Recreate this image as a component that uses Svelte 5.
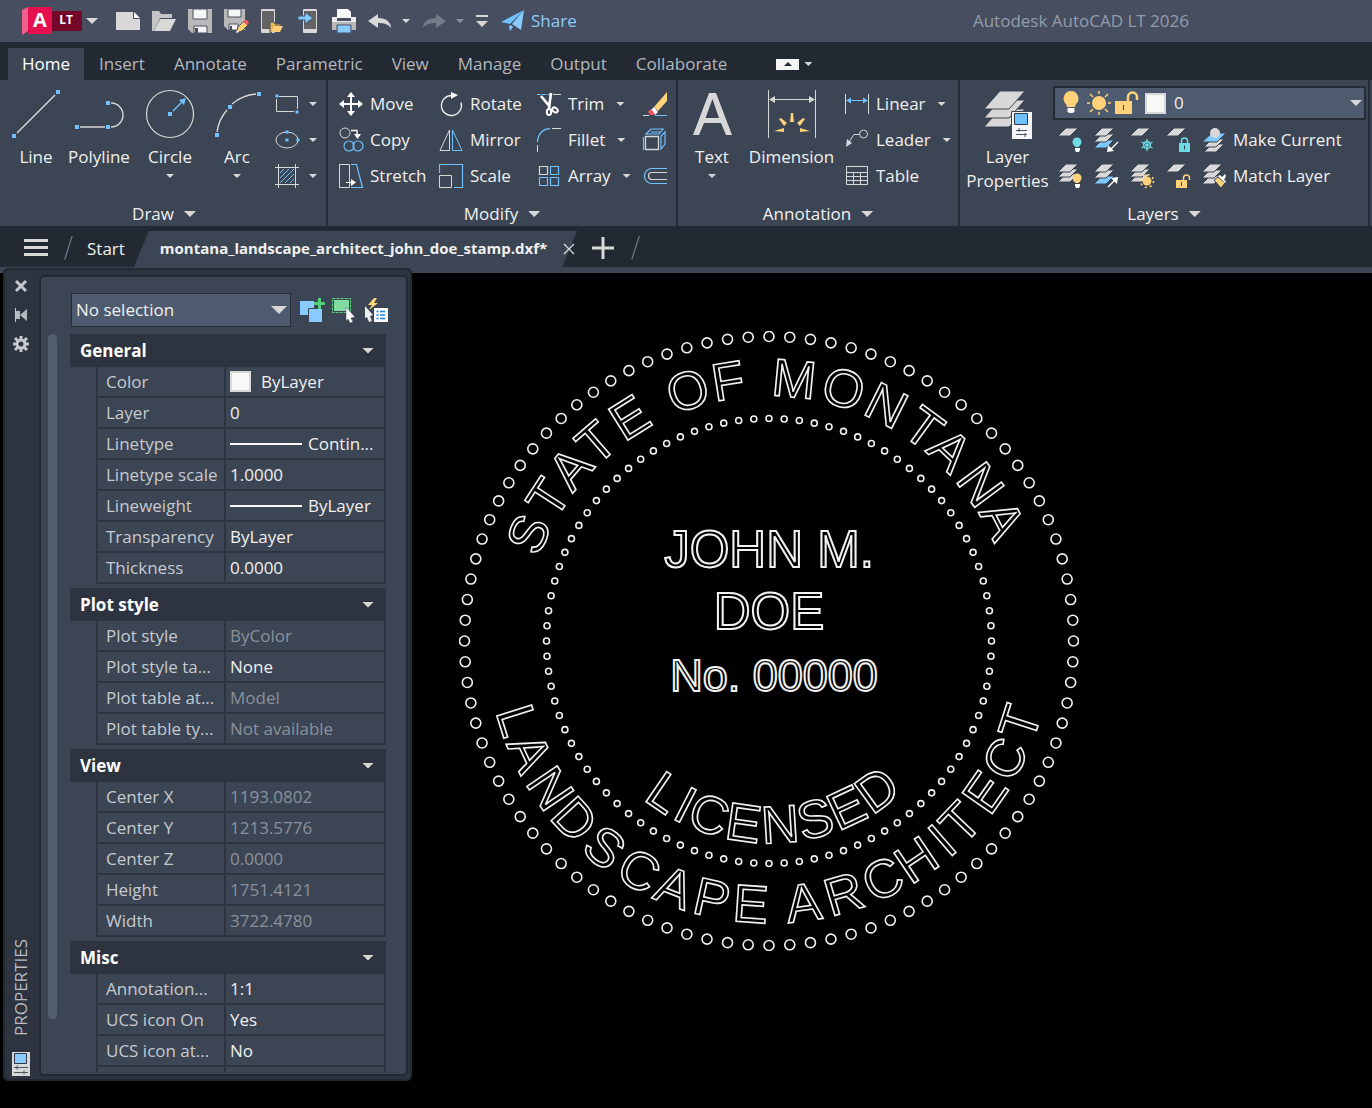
<script lang="ts">
    type Row = { label: string; value: string; kind?: "swatch" | "line"; dim?: boolean };
    type Glyph = [char: string, angle: number];

    const W = "#d8d8d8";
    const B = "#6fc1ff";
    const Y = "#ffd27a";
    const C = "#70dbe6";

    const sq = (x: number, y: number, s = 4) =>
        `<rect x="${x - s / 2}" y="${y - s / 2}" width="${s}" height="${s}" fill="${B}"/>`;
    const sheet = (y: number, fill = W, x = 0) =>
        `<path d="M${x} ${y + 8}L${x + 8} ${y}H${x + 20}L${x + 12} ${y + 8}z" fill="${fill}" stroke="#3c4553"/>`;
    const bulb = (fill: string) =>
        `<circle cx="19" cy="14" r="4.5" fill="${fill}"/><path d="M17 18h4v1h-4z" fill="${fill}"/><path d="M17 20h5v2l-1 2h-3l-1-2z" fill="#fff"/>`;

    const icons: Record<string, string> = {
        // quick access toolbar
        new: `<path d="M0 3h17v7h7v11H0z" fill="${W}"/><path d="M18 3l6 6h-6z" fill="#fff"/>`,
        open: `<path d="M0 22V2h7l2 3h11v4H8L2 22z" fill="#c4c4c4"/><path d="M8 10h16l-6 12H2z" fill="${W}"/>`,
        save: `<path d="M0 0h24v24H4l-4-4z" fill="#b9b9b9"/><path d="M5 0h14v10H5zM6 17h13v7H6z" fill="#f5f5f5" stroke="#464e60"/><path d="M7 19h3v5H7z" fill="#464e60"/>`,
        saveas: `<path d="M0 0h21v21H4l-4-4z" fill="#b9b9b9"/><path d="M4 0h13v8H4zM5 15h9v6H5z" fill="#f5f5f5" stroke="#464e60"/><path d="M6 17h2v4H6z" fill="#464e60"/><path d="M12 24l2-6 6-6 4 4-6 6z" fill="${Y}" stroke="#464e60"/><path d="M19 13l2-2h2l2 3-2 2z" fill="#f4555e"/><path d="M12 24l1-3 2 2z" fill="#fff"/>`,
        openmobile: `<rect x="1" y="0" width="14" height="24" rx="1" fill="${W}"/><path d="M2 2h12v18H2z" fill="#646464"/><path d="M10 24V13h4l1 2h6v2h-6l-4 7z" fill="#e9b558" stroke="#464e60"/><path d="M14 17h9l-3 6h-9z" fill="${Y}"/>`,
        savemobile: `<rect x="7" y="0" width="14" height="24" rx="1" fill="${W}"/><path d="M8 2h12v18H8z" fill="#646464"/><path d="M2 7h7V3l8 6-8 6v-4H2z" fill="#7cc8ff" stroke="#464e60"/>`,
        print: `<path d="M5 0h11l3 3v6H5z" fill="#f8f8f8"/><path d="M0 8h5v4h14V8h5v6H0z" fill="#ececec"/><path d="M0 13h24v8H0z" fill="#b8b8b8"/><path d="M5 16h14v8H5z" fill="#8acbff" stroke="#464e60"/>`,
        undo: `<path d="M0 12l10-7v4c8 0 13 4 13 10-3-4-7-5-13-5v5z" fill="${W}"/>`,
        redo: `<path d="M24 12L14 5v4C6 9 1 13 1 19c3-4 7-5 13-5v5z" fill="#737b89"/>`,
        share: `<path d="M0 13L23 1 9 15z" fill="#6fc1ff"/><path d="M23 1l-3 20-9-6zM8 16l3 1 1 1-3 4z" fill="#8acbff"/>`,

        // draw
        line: `<path d="M5 43L43 5" stroke="${W}" stroke-width="1.4"/>${sq(2, 46)}${sq(46, 2)}`,
        polyline: `<path d="M5 37h25M36 13A12 12 0 0 1 36 37" stroke="${W}" stroke-width="1.4" fill="none"/>${sq(2, 37)}${sq(33, 37)}${sq(33, 13)}`,
        circle: `<circle cx="24" cy="24" r="23.5" fill="none" stroke="${W}" stroke-width="1.2"/><path d="M27 21l9-9" stroke="${B}" stroke-width="1.4"/><path d="M40 8l-2 7-5-5z" fill="${B}"/>${sq(24, 24)}`,
        arc: `<path d="M4 42A42 42 0 0 1 14 20M19 14A42 42 0 0 1 43 4" fill="none" stroke="${W}" stroke-width="1.4"/>${sq(4, 45)}${sq(17, 17)}${sq(46, 4)}`,
        rect: `<path d="M4 4.500h18.500V17M19 19.500H1.500V7" fill="none" stroke="${W}"/>${sq(2, 4, 3)}${sq(22, 20, 3)}`,
        ellipse: `<ellipse cx="12" cy="12" rx="11" ry="8" fill="none" stroke="${W}"/>${sq(12, 4, 3)}${sq(12, 12, 3)}${sq(23, 12, 3)}`,
        hatch: `<path d="M3.500 0v24M20.500 0v24M0 3.500h24M0 20.500h24" stroke="${W}"/><path d="M5 9l4-4M5 14l9-9M5 19L19 5M10 19l9-9M15 19l4-4" stroke="${B}"/>`,

        // modify
        move: `<path d="M12 0l4 5h-3v6h6V8l5 4-5 4v-3h-6v6h3l-4 5-4-5h3v-6H5v3l-5-4 5-4v3h6V5H8z" fill="#fff"/>`,
        rotate: `<path d="M13 3.500a10 10 0 1 0 9 7M9 4a10 10 0 0 1 5-.500" fill="none" stroke="#eee" stroke-width="1.3"/><path d="M12 0l7 3-7 4z" fill="#fff"/>`,
        trim: `<path d="M0 2.500h15" stroke="${B}" stroke-dasharray="4 1"/><path d="M16 2.500h8" stroke="${W}"/><path d="M4 4l9 11M14 1l-2 15" stroke="#fff" stroke-width="2.600"/><g fill="none" stroke="#fff" stroke-width="2"><ellipse cx="12" cy="20" rx="2.200" ry="3"/><ellipse cx="18" cy="18" rx="3" ry="2.200" transform="rotate(35 18 18)"/></g>`,
        erase: `<path d="M0 23.500h6" stroke="${W}"/><path d="M12 23.500h12" stroke="${B}"/><path d="M11 15L24 0v9L15 19z" fill="${Y}"/><path d="M8 18l3-3 4 5-3 3z" fill="#fff"/><path d="M5 20l3-3 4 5-2 1H7z" fill="#f4555e"/>`,
        copy: `<circle cx="6" cy="5" r="5" fill="none" stroke="${W}"/><path d="M12 2.500h6V6" fill="none" stroke="#fff" stroke-width="1.400"/><path d="M15 6h7l-3.500 5z" fill="#fff"/><g fill="none" stroke="${B}" stroke-width="1.200"><circle cx="10" cy="18" r="5"/><circle cx="19" cy="18" r="5"/></g>`,
        mirror: `<path d="M10.500 2v20.500H1z" fill="none" stroke="${W}"/><path d="M13.500 2v20.500H23z" fill="none" stroke="${B}"/>`,
        fillet: `<path d="M.500 14C.500 6 6 1 13 .500" fill="none" stroke="${B}" stroke-width="1.300"/><path d="M15 .500h9M.500 17v7" stroke="${W}"/>`,
        explode: `<path d="M2.500 8.500h13v13h-13z" fill="none" stroke="${W}" stroke-width="1.300"/><path d="M.500 22V9M3 6l5-5h12l-4 5zM8 4h10M18 8l4-4v12l-4 5z" fill="none" stroke="${B}" stroke-width="1.200"/>`,
        stretch: `<path d="M.500.500h10v23H.500z" fill="none" stroke="${W}"/><path d="M12 .500h5.500l6 23H12" fill="none" stroke="${B}" stroke-width="1.200"/><path d="M7 18.500h7" stroke="#fff"/><path d="M12 15l5 3.500-5 3.500z" fill="#fff"/>`,
        scale: `<path d="M.500 9V.500h23v23H15" fill="none" stroke="${B}" stroke-width="1.200"/><path d="M.500 11.500h12v12H.500z" fill="none" stroke="${W}"/>`,
        array: `<path d="M2.500 2.500h8v8h-8z" fill="none" stroke="${W}" stroke-width="1.200"/><path d="M13.500 2.500h8v8h-8zM2.500 13.500h8v8h-8zM13.500 13.500h8v8h-8z" fill="none" stroke="${B}" stroke-width="1.200"/>`,
        offset: `<path d="M24 4.500H9a7.500 7.500 0 0 0 0 15h15" fill="none" stroke="${B}" stroke-width="1.200"/><path d="M24 8.500H9a3.500 3.500 0 0 0 0 7h15" fill="none" stroke="${W}" stroke-width="1.200"/>`,

        // annotation
        text: `<path d="M5 45L21 3h7l16 42h-6l-5-12H16l-5 12zM17.500 28h13.500L24.500 9z" fill="${W}" fill-rule="evenodd"/>`,
        dimension: `<path d="M.500 0v48M47.500 0v48M5 9.500h38" stroke="${W}"/><path d="M1 9.500l6-3.500v7zM47 9.500L41 6v7z" fill="${W}"/><g fill="${Y}"><path d="M23 23h2l1 9h-4zM11 29l2-1 6 5-3 3zM37 29l-2-1-6 5 3 3zM6 41l10-3v4zM42 41l-10-3v4z"/></g>`,
        linear: `<path d="M.500 2v20M23.500 2v20" stroke="${W}"/><path d="M4 8.500h16" stroke="${B}"/><path d="M1 8.500l5-3v6zM23 8.500l-5-3v6z" fill="${B}"/>`,
        leader: `<circle cx="18.500" cy="6" r="4" fill="none" stroke="${W}"/><path d="M14 6.500H9L4 14" fill="none" stroke="${W}"/><path d="M1 19l1-8 5 4z" fill="${W}"/>`,
        table: `<path d="M1.500 2.500h21v18h-21zM1.500 8.500h21M1.500 12.500h21M1.500 16.500h21M8.500 8v12M15.500 8v12" fill="none" stroke="${W}"/>`,

        // layers
        layerprops: `<g fill="${W}" stroke="#3c4553"><path d="M0 37l16-18h25L25 37z"/><path d="M0 28l16-18h25L25 28z"/><path d="M0 19L16 1h25L25 19z"/></g><path d="M27.500 21.500h21v28h-21z" fill="#f6f6f6" stroke="#3c4553"/><path d="M30.500 23.500h13v11h-13z" fill="#6fc1ff" stroke="#2d3748"/><path d="M32 40.500h11M32 44.500h11M35 38v4M41 43v4" stroke="#4c5563"/>`,
        bulb: `<path d="M12 0a7.500 7.500 0 0 1 5 13l-1 3H8l-1-3A7.500 7.500 0 0 1 12 0z" fill="${Y}"/><path d="M8.500 17h7v4l-2 1h-3l-2-1z" fill="#f8f8f8"/>`,
        sun: `<circle cx="12" cy="12" r="7" fill="${Y}"/><path d="M12 0v3M12 21v3M0 12h3M21 12h3M3 3l3 3M18 18l3 3M3 21l3-3M18 6l3-3" stroke="${Y}" stroke-width="1.500"/>`,
        unlocked: `<path d="M0 10h17v13H0z" fill="${Y}"/><path d="M13 10V6a4.500 4.500 0 0 1 9 0v3" fill="none" stroke="${Y}" stroke-width="2.500"/><path d="M8.500 14v5" stroke="#3c4553"/>`,
        layoff: `${sheet(0)}${bulb(C)}`,
        layiso: `${sheet(12, "#7cc8ff")}${sheet(6)}${sheet(0)}<path d="M24 14l-8 8" stroke="#fff" stroke-width="1.500"/><path d="M13 24l1-7 6 6z" fill="#fff"/>`,
        layfreeze: `${sheet(0)}<g stroke="${C}" stroke-width="1.300" fill="none"><path d="M17 11v12M11.500 14l11 6M11.500 20l11-6"/><circle cx="17" cy="17" r="3.500"/></g>`,
        laylock: `${sheet(0)}<path d="M13 15h11v9H13z" fill="${C}"/><path d="M15.500 15v-2a3 3 0 0 1 6 0v2" fill="none" stroke="${C}" stroke-width="1.500"/><path d="M18.500 17.500v4" stroke="#23404a"/>`,
        makecurrent: `${sheet(16, W, 2)}${sheet(11, W, 2)}<path d="M0 14L10 5h14l-9 9z" fill="#7cc8ff" stroke="#3c4553"/><circle cx="13" cy="5" r="5" fill="${W}"/>`,
        layon: `${sheet(10)}${sheet(5)}${sheet(0)}${bulb(Y)}`,
        layuniso: `${sheet(12, "#7cc8ff")}${sheet(6)}${sheet(0)}<path d="M14 23l7-7" stroke="#fff" stroke-width="1.500"/><path d="M24 13l-1 7-6-6z" fill="#fff"/>`,
        laythaw: `${sheet(10)}${sheet(5)}${sheet(0)}<circle cx="17" cy="17" r="4.500" fill="${Y}"/><circle cx="17" cy="17" r="6.500" fill="none" stroke="${Y}" stroke-width="1.600" stroke-dasharray="2 3.100"/>`,
        layunlock: `${sheet(0)}<path d="M10 16h11v8H10z" fill="${Y}"/><path d="M17.500 16v-2a3 3 0 0 1 6 0v2" fill="none" stroke="${Y}" stroke-width="1.500"/><path d="M15.500 18v4" stroke="#3c4553"/>`,
        matchlayer: `${sheet(12)}${sheet(6)}${sheet(0)}<path d="M12 16l4-3 7 6-4 5z" fill="${Y}" stroke="#3c4553"/><path d="M16 12l2-1 2 2 3-3 1 2-2 4 2 1-1 2z" fill="#fff"/>`,

        // palette
        pickadd: `<path d="M0 3h14v14H0z" fill="#8acbff"/><path d="M8.500 10.500h14v14h-14z" fill="#8acbff" stroke="#3c4553"/><path d="M14 4h4V0h3v4h4v3h-4v4h-3V7h-4z" fill="#54cf7b"/>`,
        select: `<path d="M.500.500h18v14H.500z" fill="none" stroke="#5cd483" stroke-dasharray="3 1"/><path d="M2 2h15v11H2z" fill="#82dba0"/><path d="M14 9l9 10-4 1 2 4-3 1-2-4-2 2z" fill="#fff" stroke="#3c4553" stroke-width=".5"/>`,
        quick: `<path d="M1 8l8 9-3 1 2 5-3 1-2-5-2 1z" fill="#eee"/><path d="M10 0L4 7h4l-3 5 9-7h-4l3-5z" fill="${Y}"/><path d="M10 10h14v14H10z" fill="#f8f8f8"/><path d="M12.500 13.500h2M16 13.500h5M12.500 17h2M16 17h5M12.500 20.500h2M16 20.500h5" stroke="#1b86d8" stroke-width="1.300"/>`,
        close: `<path d="M7 7l10 10M17 7L7 17" stroke="#c4c8ce" stroke-width="3"/>`,
        autohide: `<path d="M6 5h1v14H6z" fill="#c4c8ce"/><path d="M7 8h4v8H7zM18 6v12l-7-6z" fill="#b4b9c0"/>`,
        gear: `<circle cx="12" cy="12" r="4" fill="none" stroke="#c4c8ce" stroke-width="3"/><path d="M12 4v3M12 17v3M4 12h3M17 12h3M6 6l3 3M15 15l3 3M6 18l3-3M15 9l3-3" stroke="#c4c8ce" stroke-width="3"/>`,
        properties: `<path d="M3 0h18v24H3z" fill="${W}"/><path d="M5.500 1.500h12v10h-12z" fill="#8acbff" stroke="#2d3748"/><path d="M5 15.500h14M5 20.500h14M8 13.500v4M15 18.500v4" stroke="#4c5563"/>`,
    };

    const tabs = ["Home", "Insert", "Annotate", "Parametric", "View", "Manage", "Output", "Collaborate"];

    const drawTools = [
        { id: "line", label: "Line" },
        { id: "polyline", label: "Polyline" },
        { id: "circle", label: "Circle", menu: true },
        { id: "arc", label: "Arc", menu: true },
    ];
    const modifyTools = [
        { id: "move", label: "Move" },
        { id: "rotate", label: "Rotate" },
        { id: "trim", label: "Trim", menu: true },
        { id: "erase" },
        { id: "copy", label: "Copy" },
        { id: "mirror", label: "Mirror" },
        { id: "fillet", label: "Fillet", menu: true },
        { id: "explode" },
        { id: "stretch", label: "Stretch" },
        { id: "scale", label: "Scale" },
        { id: "array", label: "Array", menu: true },
        { id: "offset" },
    ];
    const layerTools = [
        { id: "layoff" },
        { id: "layiso" },
        { id: "layfreeze" },
        { id: "laylock" },
        { id: "makecurrent", label: "Make Current" },
        { id: "layon" },
        { id: "layuniso" },
        { id: "laythaw" },
        { id: "layunlock" },
        { id: "matchlayer", label: "Match Layer" },
    ];

    const sections: { title: string; rows: Row[] }[] = [
        {
            title: "General",
            rows: [
                { label: "Color", value: "ByLayer", kind: "swatch" },
                { label: "Layer", value: "0" },
                { label: "Linetype", value: "Contin...", kind: "line" },
                { label: "Linetype scale", value: "1.0000" },
                { label: "Lineweight", value: "ByLayer", kind: "line" },
                { label: "Transparency", value: "ByLayer" },
                { label: "Thickness", value: "0.0000" },
            ],
        },
        {
            title: "Plot style",
            rows: [
                { label: "Plot style", value: "ByColor", dim: true },
                { label: "Plot style ta...", value: "None" },
                { label: "Plot table at...", value: "Model", dim: true },
                { label: "Plot table ty...", value: "Not available", dim: true },
            ],
        },
        {
            title: "View",
            rows: [
                { label: "Center X", value: "1193.0802", dim: true },
                { label: "Center Y", value: "1213.5776", dim: true },
                { label: "Center Z", value: "0.0000", dim: true },
                { label: "Height", value: "1751.4121", dim: true },
                { label: "Width", value: "3722.4780", dim: true },
            ],
        },
        {
            title: "Misc",
            rows: [
                { label: "Annotation...", value: "1:1" },
                { label: "UCS icon On", value: "Yes" },
                { label: "UCS icon at...", value: "No" },
                { label: "", value: "" },
            ],
        },
    ];

    // angles are measured from straight up for the top arc, from straight down for the others
    const topArc: Glyph[] = [
        ["S", -66], ["T", -57], ["A", -49], ["T", -41], ["E", -32], ["O", -18], ["F", -9],
        ["M", 5.5], ["O", 16.5], ["N", 26.5], ["T", 36], ["A", 43.5], ["N", 53.5], ["A", 62.5],
    ];
    const bottomArc: Glyph[] = [
        ["L", -72.5], ["A", -65], ["N", -56], ["D", -47.5], ["S", -38.5], ["C", -29.5], ["A", -21],
        ["P", -12.5], ["E", -4], ["A", 7.5], ["R", 16.5], ["C", 25.5], ["H", 34], ["I", 41],
        ["T", 46.5], ["E", 55], ["C", 63.5], ["T", 72],
    ];
    const innerArc: Glyph[] = [
        ["L", -34.5], ["I", -27], ["C", -19], ["E", -8], ["N", 3.5], ["S", 14.5], ["E", 25], ["D", 36],
    ];

    const dots = Array.from({ length: 92 }, (_, i) => {
        const a = (i / 92) * Math.PI * 2;
        return { x: Math.sin(a), y: -Math.cos(a) };
    });

    let activeTab = $state("Home");
</script>

{#snippet icon(name: string, size = 24)}
    <svg class="icon" width={size} height={size} viewBox="0 0 {size} {size}" aria-hidden="true">
        {@html icons[name]}
    </svg>
{/snippet}

{#snippet tool(id: string, label?: string, menu?: boolean)}
    <button class="tool" aria-label={label ?? id}>
        {@render icon(id)}
        {#if label}<span>{label}</span>{/if}
        {#if menu}<i class="caret"></i>{/if}
    </button>
{/snippet}

{#snippet bigTool(id: string, label: string, menu?: boolean)}
    <button class="big-tool">
        {@render icon(id, 48)}
        <span>{label}</span>
        {#if menu}<i class="caret"></i>{/if}
    </button>
{/snippet}

{#snippet panelTitle(title: string)}
    <button class="panel-title">{title}<i class="caret wide"></i></button>
{/snippet}

{#snippet arcText(glyphs: Glyph[], baseline: number, below: boolean)}
    {#each glyphs as [char, angle]}
        <text y={below ? baseline : -baseline} transform="rotate({below ? -angle : angle})">{char}</text>
    {/each}
{/snippet}

<div class="app">
    <header class="titlebar">
        <button class="logo" aria-label="Application menu">
            <svg width="60" height="28" viewBox="0 0 60 28" aria-hidden="true">
                <path d="M0 3l6-3v24l-6 4z" fill="#f0608a" />
                <path d="M30 4h30v20H30z" fill="#73082a" />
                <path d="M6 0h24v27H6z" fill="#e51050" />
            </svg>
            <b class="mark">A</b>
            <b class="edition">LT</b>
            <i class="caret wide"></i>
        </button>
        <div class="quick">
            {#each ["new", "open", "save", "saveas", "openmobile", "savemobile", "print"] as id}
                <button aria-label={id}>{@render icon(id)}</button>
            {/each}
            <button class="split" aria-label="Undo">{@render icon("undo")}<i class="caret"></i></button>
            <button class="split" aria-label="Redo">{@render icon("redo")}<i class="caret muted"></i></button>
            <button class="customize" aria-label="Customize toolbar"><i class="caret wide"></i></button>
        </div>
        <button class="share">{@render icon("share")}<span>Share</span></button>
        <div class="app-title">Autodesk AutoCAD LT 2026</div>
    </header>

    <nav class="tabs">
        {#each tabs as tab}
            <button class="tab" class:active={tab === activeTab} onclick={() => (activeTab = tab)}>{tab}</button>
        {/each}
        <button class="minimize" aria-label="Minimize ribbon"><span class="up"></span><i class="caret"></i></button>
    </nav>

    <div class="ribbon">
        <section class="panel">
            <div class="body draw">
                {#each drawTools as t}
                    {@render bigTool(t.id, t.label, t.menu)}
                {/each}
                <div class="stack">
                    {@render tool("rect", undefined, true)}
                    {@render tool("ellipse", undefined, true)}
                    {@render tool("hatch", undefined, true)}
                </div>
            </div>
            {@render panelTitle("Draw")}
        </section>
        <section class="panel">
            <div class="body modify">
                {#each modifyTools as t}
                    {@render tool(t.id, t.label, t.menu)}
                {/each}
            </div>
            {@render panelTitle("Modify")}
        </section>
        <section class="panel">
            <div class="body annotation">
                {@render bigTool("text", "Text", true)}
                {@render bigTool("dimension", "Dimension")}
                <div class="stack">
                    {@render tool("linear", "Linear", true)}
                    {@render tool("leader", "Leader", true)}
                    {@render tool("table", "Table")}
                </div>
            </div>
            {@render panelTitle("Annotation")}
        </section>
        <section class="panel">
            <div class="body layers">
                {@render bigTool("layerprops", "Layer Properties")}
                <div class="layer-tools">
                    <div class="layer-select">
                        {@render icon("bulb")}
                        {@render icon("sun")}
                        {@render icon("unlocked")}
                        <span class="swatch"></span>
                        <select aria-label="Current layer"><option>0</option></select>
                        <i class="caret wide"></i>
                    </div>
                    <div class="layer-grid">
                        {#each layerTools as t}
                            {@render tool(t.id, t.label)}
                        {/each}
                    </div>
                </div>
            </div>
            {@render panelTitle("Layers")}
        </section>
    </div>

    <nav class="documents">
        <button class="hamburger" aria-label="Documents"><span></span><span></span><span></span></button>
        <i class="slash"></i>
        <button class="start">Start</button>
        <div class="document">
            <button class="name">montana_landscape_architect_john_doe_stamp.dxf*</button>
            <button class="close" aria-label="Close drawing">
                <svg width="12" height="12" viewBox="0 0 12 12"><path d="M1 1l10 10M11 1L1 11" stroke="#d8d8d8" stroke-width="1.3" /></svg>
            </button>
        </div>
        <button class="add" aria-label="New drawing">
            <svg width="22" height="22" viewBox="0 0 22 22"><path d="M11 0v22M0 11h22" stroke="#d8d8d8" stroke-width="3" /></svg>
        </button>
        <i class="slash"></i>
    </nav>

    <main class="workspace">
        <aside class="palette">
            <div class="rail">
                <button aria-label="Close palette">{@render icon("close")}</button>
                <button aria-label="Auto-hide">{@render icon("autohide")}</button>
                <button aria-label="Palette settings">{@render icon("gear")}</button>
                <span class="rail-title">PROPERTIES</span>
                {@render icon("properties")}
            </div>
            <div class="sheet">
                <div class="selection">
                    <div class="selection-box">
                        <select aria-label="Selection"><option>No selection</option></select>
                        <i class="caret large"></i>
                    </div>
                    <button aria-label="Toggle pick add">{@render icon("pickadd", 25)}</button>
                    <button aria-label="Select objects">{@render icon("select", 25)}</button>
                    <button aria-label="Quick select">{@render icon("quick", 25)}</button>
                </div>
                <div class="list">
                    <div class="scrollbar"></div>
                    <div class="sections">
                        {#each sections as section}
                            <section>
                                <button class="section-head">{section.title}<i class="caret wide"></i></button>
                                <table>
                                    <tbody>
                                        {#each section.rows as row}
                                            <tr>
                                                <th scope="row">{row.label}</th>
                                                <td class:dim={row.dim}>
                                                    <div class="value">
                                                        {#if row.kind === "swatch"}<span class="swatch"></span>{/if}
                                                        {#if row.kind === "line"}<span class="rule"></span>{/if}
                                                        {row.value}
                                                    </div>
                                                </td>
                                            </tr>
                                        {/each}
                                    </tbody>
                                </table>
                            </section>
                        {/each}
                    </div>
                </div>
            </div>
        </aside>

        <div class="canvas">
            <svg class="stamp" width="620" height="620" viewBox="-310 -310 620 620">
                {#each dots as dot}
                    <circle cx={dot.x * 304.5} cy={dot.y * 304.5} r="5" />
                    <circle cx={dot.x * 222.5} cy={dot.y * 222.5} r="3" />
                {/each}
                {@render arcText(topArc, 245, false)}
                {@render arcText(bottomArc, 282, true)}
                {@render arcText(innerArc, 202, true)}
                <g class="name-lines">
                    <text y="-74">JOHN M.</text>
                    <text y="-12">DOE</text>
                    <text class="number" x="5" y="50">No. 00000</text>
                </g>
            </svg>
        </div>
    </main>
</div>

<style>
    :global(body) {
        background: #000;
    }

    .app {
        min-height: 100vh;
        display: flex;
        flex-direction: column;
        background: #000;
        color: #f0f0f0;
        font-family: "Open Sans", "Noto Sans", sans-serif;
        font-size: 17px;
        line-height: 24px;
    }

    button,
    select {
        margin: 0;
        padding: 0;
        border: 0;
        background: none;
        color: inherit;
        font: inherit;
    }
    select {
        appearance: none;
        flex: 1;
        min-width: 0;
    }
    .icon {
        display: block;
        flex: none;
        overflow: visible;
    }

    .caret {
        flex: none;
        width: 8px;
        height: 4px;
        background: #d8d8d8;
        clip-path: polygon(0 0, 100% 0, 50% 100%);
    }
    .caret.wide {
        width: 12px;
        height: 6px;
    }
    .caret.large {
        width: 16px;
        height: 8px;
    }
    .caret.muted {
        background: #8b92a0;
    }
    .swatch {
        flex: none;
        width: 21px;
        height: 21px;
        box-sizing: border-box;
        border: 2px solid #d8d8d8;
        background: #f8f8f8;
    }

    /* title bar */
    .titlebar {
        display: flex;
        align-items: center;
        height: 42px;
        padding-left: 22px;
        background: #464e60;
    }
    .logo {
        position: relative;
        display: flex;
        align-items: center;
        gap: 4px;
        margin-right: 18px;
    }
    .mark,
    .edition {
        position: absolute;
        top: 0;
        color: #fff;
    }
    .mark {
        left: 6px;
        width: 24px;
        font-size: 20px;
        line-height: 26px;
    }
    .edition {
        left: 30px;
        width: 28px;
        font-size: 12px;
        line-height: 26px;
    }
    .quick {
        display: flex;
        align-items: center;
        gap: 12px;
    }
    .split {
        display: flex;
        align-items: center;
        gap: 10px;
    }
    .customize {
        display: flex;
        padding-top: 4px;
        border-top: 2px solid #d8d8d8;
    }
    .share {
        display: flex;
        align-items: center;
        gap: 6px;
        margin-left: 13px;
        color: #8fcdf8;
    }
    .app-title {
        margin-left: auto;
        margin-right: 183px;
        color: #949cab;
    }

    /* ribbon tabs */
    .tabs {
        display: flex;
        align-items: stretch;
        gap: 1px;
        height: 32px;
        padding: 6px 8px 0;
        background: #222932;
        color: #b3b8bf;
    }
    .tab {
        padding: 0 14px;
    }
    .tab.active {
        background: #3c4553;
        color: #fff;
    }
    .minimize {
        display: flex;
        align-items: center;
        gap: 5px;
        margin-left: 34px;
    }
    .minimize .up {
        width: 23px;
        height: 11px;
        background: #f4f4f4;
        display: grid;
        place-items: center;
    }
    .up::after {
        content: "";
        border: 4px solid transparent;
        border-top: 0;
        border-bottom: 4px solid #222932;
    }

    /* ribbon */
    .ribbon {
        display: grid;
        grid-template-columns: 326px 350px 282px 1fr;
        padding: 0 2px;
        background: #3c4553;
        border-bottom: 2px solid #222932;
    }
    .panel {
        box-sizing: border-box;
        min-width: 0;
        height: 146px;
        display: flex;
        flex-direction: column;
        border-right: 2px solid #252c36;
    }
    .body {
        display: grid;
        height: 108px;
        padding-top: 6px;
    }
    .body.draw {
        grid-template-columns: 52px 74px 68px 66px 1fr;
        padding-left: 8px;
    }
    .body.modify {
        grid-template-columns: 100px 98px 106px 24px;
        grid-auto-rows: 36px;
        padding-left: 11px;
    }
    .body.annotation {
        grid-template-columns: 52px 107px 1fr;
        padding-left: 8px;
    }
    .body.layers {
        grid-template-columns: 91px 1fr;
        padding-left: 2px;
    }
    .tool {
        display: flex;
        align-items: center;
        height: 36px;
        white-space: nowrap;
    }
    .tool span {
        margin-left: 7px;
    }
    .tool .caret {
        margin-left: 12px;
    }
    .stack {
        padding-left: 5px;
    }
    .annotation .stack {
        padding-left: 0;
    }
    .stack .icon + .caret {
        margin-left: 10px;
    }
    .big-tool {
        display: flex;
        flex-direction: column;
        align-items: center;
        padding-top: 4px;
        white-space: nowrap;
    }
    .big-tool span {
        margin-top: 7px;
    }
    .big-tool .caret {
        margin-top: 5px;
    }
    .layers .big-tool span {
        width: min-content;
        white-space: normal;
    }
    .panel-title {
        display: flex;
        align-items: center;
        justify-content: center;
        gap: 10px;
        margin-top: 8px;
    }
    .layer-tools {
        padding-right: 2px;
    }
    .layer-select {
        box-sizing: border-box;
        display: flex;
        align-items: center;
        gap: 4px;
        height: 34px;
        margin-bottom: 2px;
        padding: 0 2px 0 4px;
        border: 2px solid #252c36;
        background: #4e5a6d;
    }
    .layer-select .swatch {
        margin: 0 4px 0 2px;
    }
    .layer-grid {
        display: grid;
        grid-template-columns: 36px 36px 36px 36px 1fr;
        padding-left: 5px;
    }

    /* drawing tabs */
    .documents {
        display: flex;
        align-items: center;
        height: 39px;
        padding-left: 24px;
        background: #222932;
        border-bottom: 6px solid #3c4553;
    }
    .hamburger {
        display: grid;
        gap: 4px;
        width: 24px;
        margin-right: 16px;
    }
    .hamburger span {
        height: 3px;
        background: #d8d8d8;
    }
    .slash {
        width: 9px;
        height: 24px;
        background: #6b7585;
        clip-path: polygon(85% 0, 100% 0, 15% 100%, 0 100%);
    }
    .start {
        margin: 0 9px 0 14px;
        padding-top: 2px;
    }
    .document {
        position: relative;
        isolation: isolate;
        display: flex;
        align-items: center;
        align-self: flex-end;
        height: 36px;
        padding: 0 2px 0 26px;
    }
    .document::before {
        content: "";
        position: absolute;
        inset: 0;
        z-index: -1;
        background: #3c4553;
        clip-path: polygon(15px 0, 100% 0, calc(100% - 15px) 100%, 0 100%);
    }
    .name {
        padding-bottom: 3px;
        font-size: 15px;
        font-weight: 700;
    }
    .document .close {
        display: flex;
        margin-left: 16px;
    }
    .add {
        display: flex;
        margin: 0 17px 0 15px;
    }

    /* properties palette */
    .workspace {
        flex: 1;
        display: flex;
        align-items: flex-start;
    }
    .palette {
        position: relative;
        box-sizing: border-box;
        flex: none;
        display: flex;
        width: 409px;
        margin: -5px 0 0 3px;
        padding: 5px 2px 3px 0;
        border: 2px solid #232933;
        border-radius: 5px;
        background: #2d333f;
    }
    .rail {
        box-sizing: border-box;
        display: flex;
        flex-direction: column;
        align-items: center;
        width: 34px;
        margin-top: -4px;
        padding-right: 3px;
    }
    .rail button {
        height: 29px;
    }
    .rail-title {
        margin-top: auto;
        margin-bottom: 16px;
        writing-mode: vertical-rl;
        transform: rotate(180deg);
        color: #b8bcc3;
        font-size: 17px;
    }
    .sheet {
        flex: 1;
        min-width: 0;
        padding: 16px 20px 2px 7px;
        border: 2px solid #232933;
        border-radius: 5px;
        background: #3c4553;
    }
    .selection {
        display: flex;
        align-items: center;
        gap: 7px;
        padding-left: 23px;
        margin: 0 -3px 7px 0;
    }
    .selection button {
        flex: none;
    }
    .selection-box {
        box-sizing: border-box;
        flex: 1;
        display: flex;
        align-items: center;
        height: 34px;
        margin-right: 2px;
        padding: 0 3px 0 4px;
        border: 1px solid #252c36;
        background: #4e5a6d;
    }
    .list {
        display: flex;
        gap: 13px;
        max-height: 738px;
        overflow: hidden;
    }
    .scrollbar {
        flex: none;
        width: 9px;
        height: 685px;
        border-radius: 5px;
        background: #525f70;
    }
    .sections {
        flex: 1;
        display: grid;
        gap: 4px;
    }
    .section-head {
        display: flex;
        align-items: center;
        justify-content: space-between;
        width: 100%;
        height: 33px;
        padding: 0 12px 0 10px;
        background: #2d333f;
        color: #fff;
        font-weight: 700;
    }
    table {
        table-layout: fixed;
        width: calc(100% - 26px);
        margin-left: 26px;
        border-left: 2px solid #2d333f;
        border-spacing: 0;
        white-space: nowrap;
    }
    th,
    td {
        box-sizing: border-box;
        height: 31px;
        padding: 0;
        border-right: 2px solid #2d333f;
        border-bottom: 2px solid #2d333f;
        font-weight: 400;
        text-align: left;
    }
    th {
        width: 128px;
        padding-left: 8px;
        color: #c6cad0;
    }
    td {
        padding-left: 4px;
    }
    .value {
        display: flex;
        align-items: center;
        gap: 6px;
    }
    .value .swatch {
        margin-right: 4px;
    }
    .rule {
        width: 72px;
        height: 2px;
        background: #f8f8f8;
    }
    .dim {
        color: #8a919c;
    }

    /* drawing */
    .canvas {
        flex: 1;
        min-width: 0;
        padding: 58px 0 0 47px;
    }
    .stamp {
        display: block;
        fill: none;
        stroke: #f2f2f2;
        stroke-width: 1.6;
        font-family: "Liberation Sans", Arial, sans-serif;
        font-size: 53px;
        text-anchor: middle;
    }
    .name-lines {
        stroke-width: 2;
        font-size: 51px;
    }
    .number {
        font-size: 45px;
    }
</style>
